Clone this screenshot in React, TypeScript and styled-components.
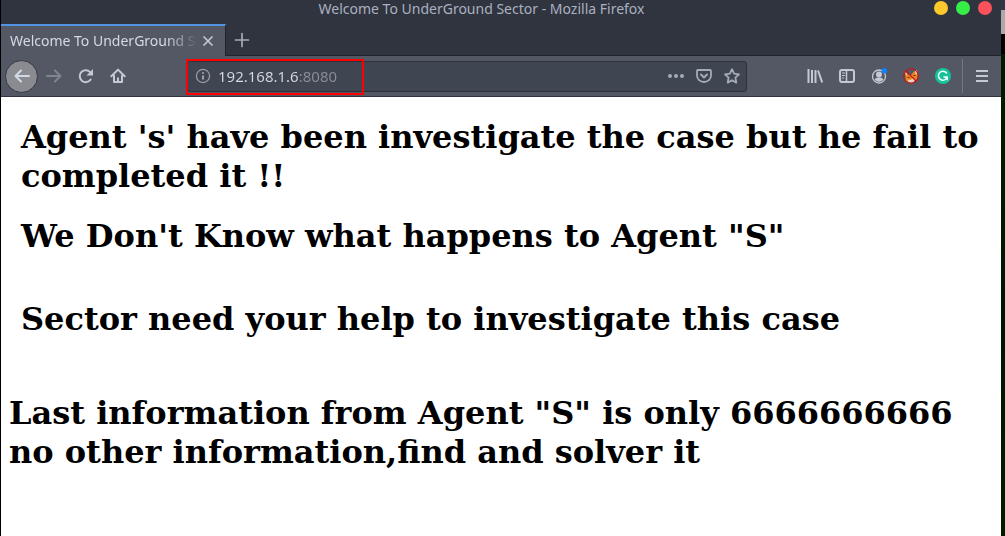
import React from "react";
import styled, { createGlobalStyle } from "styled-components";

const ui = `"Noto Sans", "Open Sans", sans-serif`;

const GlobalStyle = createGlobalStyle`
  *, *::before, *::after { box-sizing: border-box; }
  body { margin: 0; background: #000; }
`;

const Desktop = styled.div`
  min-height: 100vh;
  display: flex;
  padding-left: 1px;
  background: #000;
`;

const BrowserWindow = styled.div`
  flex: 1;
  min-width: 0;
  display: flex;
  flex-direction: column;
  background: #fff;
`;

const DesktopEdge = styled.div`
  width: 4px;
  background: linear-gradient(#303642 0 10px, #a9a9a9 10px 34px, #000 34px 54px, #001c00 54px 110px, #001400 60%, #001c00);
`;

const Chrome = styled.header`
  background: #30343f;
  font-family: ${ui};
`;

const TitleBar = styled.div`
  display: flex;
  align-items: flex-start;
  height: 24px;
  padding: 0 9px 0 30px;
`;

const WindowTitle = styled.div`
  flex: 1;
  text-align: center;
  font-size: 14px;
  line-height: 18px;
  color: #a9b1c0;
  white-space: nowrap;
`;

const WindowControls = styled.div`
  display: flex;
  gap: 8px;
  padding: 1px 0 0 2px;
`;

const WindowButton = styled.button<{ $color: string }>`
  width: 14px;
  height: 14px;
  padding: 0;
  border: 0;
  border-radius: 50%;
  background: ${(p) => p.$color};
`;

const TabStrip = styled.div`
  display: flex;
  height: 32px;
`;

const Tab = styled.div`
  display: flex;
  align-items: center;
  width: 225px;
  padding: 0 7px 1px 9px;
  background: #545864;
  border-top: 2px solid #5294e2;
  border-right: 1px solid #20242e;
`;

const TabLabel = styled.span`
  flex: 1;
  overflow: hidden;
  white-space: nowrap;
  font-size: 14px;
  line-height: 20px;
  color: #d3dae3;
  mask-image: linear-gradient(to left, transparent, #000 32px);
`;

const TabStripRest = styled.div`
  flex: 1;
  display: flex;
  border-bottom: 1px solid #20242e;
`;

const IconButton = styled.button<{ $width?: number; $color?: string }>`
  display: flex;
  align-items: center;
  justify-content: center;
  flex: none;
  width: ${(p) => p.$width ?? 32}px;
  height: 32px;
  padding: 0;
  border: 0;
  background: none;
  color: ${(p) => p.$color ?? "#c3c8d3"};
`;

const CloseTab = styled(IconButton)`
  height: 20px;
`;

const BackButton = styled(IconButton)`
  width: 33px;
  height: 33px;
  border-radius: 50%;
  border: 1px solid #343843;
  background: #898b91;
  color: #d3dae3;
`;

const Toolbar = styled.nav`
  display: flex;
  align-items: center;
  height: 41px;
  padding: 0 3px 0 4px;
  background: #545864;
  border-bottom: 1px solid #30343f;
`;

const UrlBar = styled.div`
  position: relative;
  flex: 1;
  min-width: 0;
  display: flex;
  align-items: center;
  height: 31px;
  margin: 0 52px 0 53px;
  background: #404552;
  border: 1px solid #2d313b;
  border-radius: 3px;
`;

const UrlInput = styled.input`
  flex: 1;
  min-width: 0;
  height: 24px;
  padding: 0 0 1px;
  border: 0;
  outline: 0;
  font-family: ${ui};
  font-size: 15px;
  line-height: 20px;
  color: #d3dae3;
  -webkit-text-fill-color: transparent;
  background: linear-gradient(to right, #d3dae3 81px, #888d98 81px);
  -webkit-background-clip: text;
  background-clip: text;
`;

const Highlight = styled.div`
  position: absolute;
  top: -3px;
  left: -2px;
  width: 178px;
  height: 36px;
  border: 2px solid #f00;
  border-radius: 1px;
  pointer-events: none;
`;

const Divider = styled.div`
  width: 1px;
  height: 34px;
  margin: 0 3px;
  background: #737782;
`;

const Page = styled.main`
  padding: 21px 8px;
  font-family: "DejaVu Serif", serif;
  color: #000;
`;

const Heading = styled.h1<{ $space: number; $indent?: boolean }>`
  margin: 0 0 ${(p) => p.$space}px;
  padding-left: ${(p) => (p.$indent ? 12 : 0)}px;
  font-size: 32px;
  line-height: 39px;
  font-weight: bold;
`;

const Icon = ({ children }: { children: React.ReactNode }) => (
  <svg
    width={16}
    height={16}
    viewBox="0 0 16 16"
    fill="none"
    stroke="currentColor"
    strokeWidth="2"
    strokeLinecap="round"
    strokeLinejoin="round"
    aria-hidden="true"
  >
    {children}
  </svg>
);

export default function App() {
  return (
    <Desktop>
      <GlobalStyle />
      <BrowserWindow>
        <Chrome>
          <TitleBar>
            <WindowTitle>Welcome To UnderGround Sector - Mozilla Firefox</WindowTitle>
            <WindowControls>
              <WindowButton $color="#fdc92b" aria-label="Minimize" />
              <WindowButton $color="#36ee48" aria-label="Maximize" />
              <WindowButton $color="#f9525a" aria-label="Close" />
            </WindowControls>
          </TitleBar>
          <TabStrip>
            <Tab>
              <TabLabel>Welcome To UnderGround Sector</TabLabel>
              <CloseTab $width={20} aria-label="Close tab">
                <Icon><path d="M4 4l8 8M12 4l-8 8" strokeWidth="1.7" /></Icon>
              </CloseTab>
            </Tab>
            <TabStripRest>
              <IconButton $color="#a5abb7" aria-label="New tab">
                <Icon><path d="M8 1.5v13M1.5 8h13" strokeWidth="1.7" /></Icon>
              </IconButton>
            </TabStripRest>
          </TabStrip>
          <Toolbar>
            <BackButton aria-label="Back">
              <Icon><path d="M15 8H1.5M7 2.5L1.5 8 7 13.5" /></Icon>
            </BackButton>
            <IconButton $color="#80848f" aria-label="Forward">
              <Icon><path d="M1 8h13.5M9 2.5L14.5 8 9 13.5" /></Icon>
            </IconButton>
            <IconButton aria-label="Reload">
              <Icon>
                <path d="M12.7 11.5A6 6 0 1 1 12.5 4.5" />
                <path d="M15 1v6.5H8.5z" fill="currentColor" stroke="none" />
              </Icon>
            </IconButton>
            <IconButton aria-label="Home">
              <Icon>
                <path d="M1.3 8.3L8 1.6l6.7 6.7" />
                <path d="M4 7.5V14h8V7.5" />
                <path d="M8 13.5v-4" strokeLinecap="butt" />
              </Icon>
            </IconButton>
            <UrlBar>
              <IconButton $width={30} $color="#9b9fa9" aria-label="Site information">
                <Icon>
                  <circle cx="8" cy="8" r="6.6" strokeWidth="1.2" />
                  <path d="M8 7.5v4" strokeLinecap="butt" />
                  <circle cx="8" cy="5" r="1.1" fill="currentColor" stroke="none" />
                </Icon>
              </IconButton>
              <UrlInput aria-label="Address" defaultValue="192.168.1.6:8080" />
              <IconButton $width={28} $color="#a5abb7" aria-label="Page actions">
                <Icon>
                  <g fill="currentColor" stroke="none">
                    <circle cx="2" cy="8" r="2" /><circle cx="8" cy="8" r="2" /><circle cx="14" cy="8" r="2" />
                  </g>
                </Icon>
              </IconButton>
              <IconButton $width={28} $color="#a5abb7" aria-label="Save to Pocket">
                <Icon>
                  <path d="M2 2h12a1 1 0 0 1 1 1v4.5a7 6.5 0 0 1-14 0V3a1 1 0 0 1 1-1z" strokeWidth="1.8" />
                  <path d="M5 6.5l3 3 3-3" />
                </Icon>
              </IconButton>
              <IconButton $width={28} $color="#a5abb7" aria-label="Bookmark">
                <Icon>
                  <path d="M8 1.200l2.100 4.500 4.900.6-3.600 3.400.9 4.900L8 12.200l-4.300 2.400.9-4.900L1 6.300l4.900-.6z" strokeWidth="1.8" />
                </Icon>
              </IconButton>
              <Highlight />
            </UrlBar>
            <IconButton aria-label="Library">
              <Icon><path d="M1.5 1v14M5 2v13M8.5 2v13M11 2.5l4.2 12" strokeLinecap="butt" /></Icon>
            </IconButton>
            <IconButton aria-label="Sidebars">
              <Icon>
                <rect x="1" y="2" width="14" height="12" rx="2" />
                <path d="M7.5 2v12" strokeWidth="1.5" />
                <path d="M3 5h3M3 7.5h3M3 10h2" strokeWidth="1" strokeLinecap="butt" />
              </Icon>
            </IconButton>
            <IconButton aria-label="Account">
              <Icon>
                <circle cx="8" cy="8.5" r="6.5" strokeWidth="1.3" />
                <circle cx="8" cy="6.5" r="3" fill="currentColor" stroke="none" />
                <path d="M3.5 11.5c1-1.5 2.5-2 4.5-2s3.5.5 4.5 2A5.4 5.4 0 0 1 8 13.7a5.4 5.4 0 0 1-4.5-2.200z" fill="currentColor" stroke="none" />
                <circle cx="13.3" cy="2.7" r="2.7" fill="#0a84ff" stroke="none" />
              </Icon>
            </IconButton>
            <IconButton aria-label="FoxyProxy">
              <Icon>
                <path d="M2 4l3 2.500 3 .5 3-3.500 3-1.500.8 6-1.800 4.500L8 15l-5-1.500-.5-4z" fill="#e8851c" stroke="none" />
                <path d="M12 3l2-1 .5 4-2 .5zM2 4l2 1.500-.5 2.500zM4.500 11.500l3 .5 3-2 2 2-3 2.500-4-.5z" fill="#e6d5c8" stroke="none" />
                <path d="M5 9.500h1M11 7.500h1" stroke="#4a2a18" strokeWidth="1.2" />
                <circle cx="8" cy="8" r="7.3" stroke="#c81414" strokeWidth="1.1" />
                <path d="M3 3l10 10" stroke="#c81414" strokeWidth="1.2" />
              </Icon>
            </IconButton>
            <IconButton aria-label="Grammarly">
              <Icon>
                <circle cx="8" cy="8" r="8" fill="#15c39a" stroke="none" />
                <path d="M11.5 5A4.5 4.5 0 1 0 12.2 9H9M12.2 9v2.8" stroke="#fff" strokeWidth="1.5" />
              </Icon>
            </IconButton>
            <Divider />
            <IconButton aria-label="Open menu">
              <Icon><path d="M2 3h12M2 8h12M2 13h12" strokeLinecap="butt" /></Icon>
            </IconButton>
          </Toolbar>
        </Chrome>
        <Page>
          <Heading $space={21} $indent>
            Agent 's' have been investigate the case but he fail to completed it !!
          </Heading>
          <Heading $space={44} $indent>We Don't Know what happens to Agent "S"</Heading>
          <Heading $space={55} $indent>Sector need your help to investigate this case</Heading>
          <Heading $space={0}>
            Last information from Agent "S" is only 6666666666 no other information,find and solver it
          </Heading>
        </Page>
      </BrowserWindow>
      <DesktopEdge />
    </Desktop>
  );
}
